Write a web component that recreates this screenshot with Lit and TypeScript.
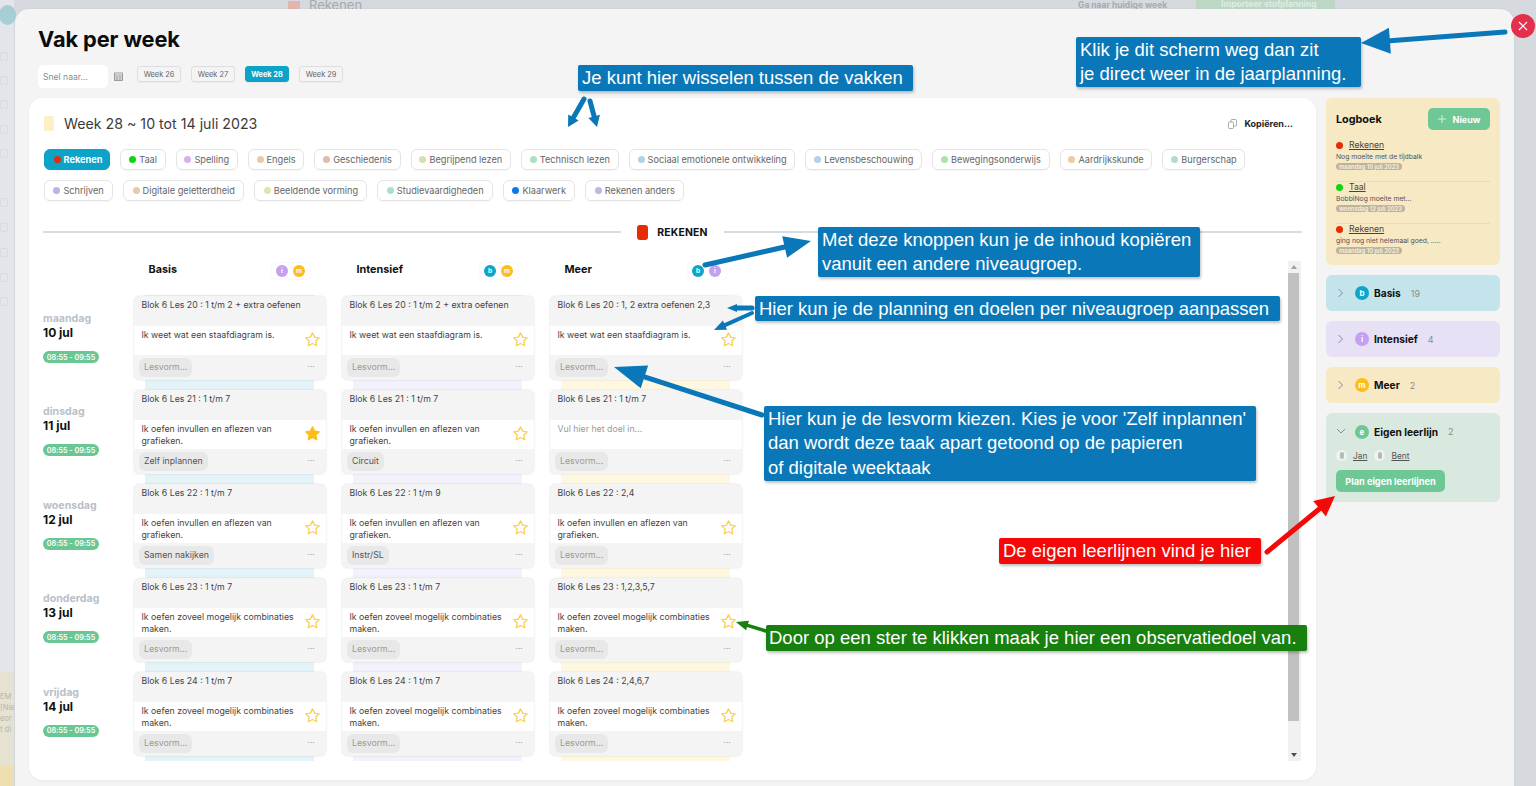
import { LitElement, html, css, svg } from "lit";
import { customElement } from "lit/decorators.js";

const chips1: [string, string][] = [
  ["Taal", "#12d60c"], ["Spelling", "#d3b2ee"], ["Engels", "#ecc9a4"], ["Geschiedenis", "#e6b9ac"], ["Begrijpend lezen", "#d6dfb4"],
  ["Technisch lezen", "#addfc6"], ["Sociaal emotionele ontwikkeling", "#aed3e6"], ["Levensbeschouwing", "#aed3ea"], ["Bewegingsonderwijs", "#aee3a8"], ["Aardrijkskunde", "#eccba3"], ["Burgerschap", "#b2dcd0"],
];
const chips2: [string, string][] = [
  ["Schrijven", "#b7b4e6"], ["Digitale geletterdheid", "#e6cba8"], ["Beeldende vorming", "#e2e3ae"], ["Studievaardigheden", "#a8e2c6"], ["Klaarwerk", "#0a78ee"], ["Rekenen anders", "#c0b6e4"],
];
const days = [["maandag", "10 jul"], ["dinsdag", "11 jul"], ["woensdag", "12 jul"], ["donderdag", "13 jul"], ["vrijdag", "14 jul"]];
const G1 = "Ik weet wat een staafdiagram is.";
const G2 = "Ik oefen invullen en aflezen van grafieken.";
const G3 = "Ik oefen zoveel mogelijk combinaties maken.";
type C = { t: string; g: string; l?: string; f?: boolean; e?: boolean };
const levels: { name: string; cls: string; badges: [string, string][]; cards: C[] }[] = [
  { name: "Basis", cls: "b", badges: [["i", "#c3a0f0"], ["m", "#fdbd1a"]], cards: [
    { t: "Blok 6 Les 20 : 1 t/m 2 + extra oefenen", g: G1 },
    { t: "Blok 6 Les 21 : 1 t/m 7", g: G2, l: "Zelf inplannen", f: true },
    { t: "Blok 6 Les 22 : 1 t/m 7", g: G2, l: "Samen nakijken" },
    { t: "Blok 6 Les 23 : 1 t/m 7", g: G3 },
    { t: "Blok 6 Les 24 : 1 t/m 7", g: G3 } ] },
  { name: "Intensief", cls: "i", badges: [["b", "#0ea5c9"], ["m", "#fdbd1a"]], cards: [
    { t: "Blok 6 Les 20 : 1 t/m 2 + extra oefenen", g: G1 },
    { t: "Blok 6 Les 21 : 1 t/m 7", g: G2, l: "Circuit" },
    { t: "Blok 6 Les 22 : 1 t/m 9", g: G2, l: "Instr/SL" },
    { t: "Blok 6 Les 23 : 1 t/m 7", g: G3 },
    { t: "Blok 6 Les 24 : 1 t/m 7", g: G3 } ] },
  { name: "Meer", cls: "m", badges: [["b", "#0ea5c9"], ["i", "#c3a0f0"]], cards: [
    { t: "Blok 6 Les 20 : 1, 2 extra oefenen 2,3", g: G1 },
    { t: "Blok 6 Les 21 : 1 t/m 7", g: "Vul hier het doel in...", e: true },
    { t: "Blok 6 Les 22 : 2,4", g: G2 },
    { t: "Blok 6 Les 23 : 1,2,3,5,7", g: G3 },
    { t: "Blok 6 Les 24 : 2,4,6,7", g: G3 } ] },
];
const log = [
  ["Rekenen", "#e62b05", "Nog moeite met de tijdbalk", "maandag 10 juli 2023"],
  ["Taal", "#12d60c", "BobbiNog moeite met...", "woensdag 12 juli 2023"],
  ["Rekenen", "#e62b05", "ging nog niet helemaal goed, .....", "maandag 10 juli 2023"],
];

const STAR = "M12 2.6l2.9 6.1 6.6.9-4.8 4.6 1.2 6.6L12 17.6l-5.9 3.2 1.2-6.6L2.5 9.6l6.6-.9z";

function arrow(x1: number, y1: number, x2: number, y2: number, w: number, hw: number, hl: number, c: string) {
  const a = Math.atan2(y2 - y1, x2 - x1);
  const bx = x2 - Math.cos(a) * hl, by = y2 - Math.sin(a) * hl;
  const nx = -Math.sin(a), ny = Math.cos(a);
  return svg`<line x1=${x1} y1=${y1} x2=${bx} y2=${by} stroke=${c} stroke-width=${w} stroke-linecap="round"></line>
    <polygon fill=${c} points="${x2},${y2} ${bx + nx * hw},${by + ny * hw} ${bx - nx * hw},${by - ny * hw}"></polygon>`;
}

@customElement("app-root")
export class AppRoot extends LitElement {
  static styles = css`
    :host { display: block; position: relative; width: 1536px; height: 786px; overflow: hidden; background: #d6dade; font-family: "Inter", "Liberation Sans", sans-serif; color: #333; }
    * { box-sizing: border-box; }
    .behind { position: absolute; inset: 0; }
    .bh-rek { position: absolute; left: 288px; top: -3px; display: flex; align-items: center; gap: 9px; font-size: 13px; color: #a6a9ad; }
    .bh-rek i { width: 12px; height: 9px; background: #e4b5ae; }
    .bh-wk { position: absolute; left: 1078px; top: 0; font-size: 8.5px; font-weight: 700; color: #a6abb0; }
    .bh-imp { position: absolute; left: 1196px; top: 0; width: 139px; height: 9px; background: #bcd8c4; font-size: 8.5px; font-weight: 700; color: #e0eae4; padding-left: 25px; line-height: 9px; overflow: hidden; }
    .bh-side { position: absolute; left: 0; top: 0; width: 14px; height: 786px; background: #e2e5e9; }
    .bh-logo { position: absolute; left: -1px; top: 5px; width: 17px; height: 20px; border-radius: 50%; background: #a7cdd6; }
    .bh-ico { position: absolute; left: 0; width: 8px; height: 9px; border: 1px solid #d8dbdf; border-radius: 2px; }
    .bh-yel { position: absolute; left: 0; top: 672px; width: 14px; height: 93px; background: #e6e2d2; font-size: 7.5px; color: #b4b3ad; line-height: 11px; padding-top: 19px; white-space: nowrap; overflow: hidden; }
    .bh-yel2 { position: absolute; left: 0; top: 765px; width: 14px; height: 21px; background: #efdfb0; }

    .page { position: relative; display: flex; padding: 9px 22px 0 15px; height: 786px; }
    .modal { flex: 1; height: 800px; background: #f4f4f4; border-radius: 14px; padding: 0 14px; box-shadow: 0 0 3px rgba(0,0,0,.05); }
    .head { height: 89px; padding: 15px 0 0 9px; }
    h1 { margin: 0; font-size: 21.8px; line-height: 30px; font-weight: 700; color: #0c0c0c; letter-spacing: -.1px; }
    .tools { display: flex; align-items: flex-start; margin-top: 11px; }
    .quick { width: 70px; height: 23px; background: #fff; border-radius: 5px; font-size: 8.6px; color: #8b8b8b; line-height: 24px; padding-left: 5px; }
    .cal { margin: 7px 14px 0 6px; width: 9px; height: 9px; }
    .weeks { display: flex; gap: 10px; margin-top: 1px; }
    .wk { width: 44px; height: 16px; border: 1px solid #dedede; border-radius: 3px; font-size: 7.4px; color: #666; display: flex; align-items: center; justify-content: center; box-shadow: 0 1px 1px rgba(0,0,0,.04); }
    .wk.on { background: #0ba3c8; color: #fff; font-weight: 700; border-color: #0ba3c8; }

    .body { display: flex; gap: 10px; }
    .main { width: 1287px; height: 682px; background: #fff; border-radius: 14px; padding: 0 14px; flex: none; box-shadow: 0 1px 3px rgba(0,0,0,.05); }
    .mh { display: flex; align-items: center; height: 51px; padding-left: 1px; }
    .flag { width: 10px; height: 15px; background: #fdf0c6; border-radius: 2px; margin-right: 10px; }
    .mt { font-size: 14.2px; color: #3a3a3a; flex: 1; }
    .copy { display: flex; align-items: center; gap: 7px; font-size: 9px; font-weight: 700; color: #222; margin-right: 9px; }
    .chips { display: flex; gap: 10px; height: 21px; margin-bottom: 10px; padding-left: 1px; }
    .chip { height: 21px; padding: 0 7.75px; border: 1px solid #e4e4e4; border-radius: 6px; font-size: 9.2px; color: #666; display: flex; align-items: center; gap: 3px; white-space: nowrap; box-shadow: 0 1px 1px rgba(0,0,0,.04); }
    .chips.r2 .chip { padding: 0 8.4px; }
    .chip i { width: 7px; height: 7px; border-radius: 50%; flex: none; margin-top: -1px; }
    .chip.on { background: #0ba3c8; border-color: #0ba3c8; color: #fff; font-weight: 700; padding: 0 7px 0 8.5px; }
    .div { display: flex; align-items: center; margin-top: 21px; height: 20px; }
    .div hr { flex: 1; border: 0; height: 2px; background: #d8dbe2; margin: 0; }
    .div .mid { width: 103px; display: flex; align-items: center; justify-content: center; gap: 9px; font-size: 10.4px; font-weight: 700; color: #111; letter-spacing: .2px; }
    .div .mid i { width: 11px; height: 15px; background: #e62b05; border-radius: 3px; }

    .sched { display: flex; margin-top: 19px; position: relative; height: 500px; }
    .dayc { width: 91px; padding-top: 33px; display: flex; flex-direction: column; flex: none; }
    .day { height: 94px; padding-top: 18px; }
    .dn { font-size: 10.6px; font-weight: 700; color: #b9bfc9; line-height: 13px; }
    .dd { font-size: 12px; font-weight: 700; color: #111; line-height: 15px; }
    .pill { width: 56px; height: 12px; border-radius: 6px; background: #6ac794; color: #fff; font-size: 7.2px; font-weight: 600; display: flex; align-items: center; justify-content: center; margin-top: 11px; }
    .lvl { width: 191.5px; margin-right: 16.5px; position: relative; flex: none; }
    .lvl::before { content: ""; position: absolute; left: 11px; right: 12px; top: 34px; height: 466px; }
    .lvl.b::before { background: #e3f3f7; }
    .lvl.i::before { background: #f2f1fc; }
    .lvl.m::before { background: #fff8e1; }
    .lh { height: 35px; display: flex; align-items: flex-start; justify-content: space-between; padding: 2px 16px 0 14.5px; position: relative; }
    .lh b { font-size: 10.8px; color: #111; line-height: 14px; margin-top: 0; }
    .sw { height: 16px; width: 38px; background: #fff; border-radius: 4px; display: flex; align-items: center; justify-content: center; gap: 5px; box-shadow: 0 0 2px rgba(0,0,0,.1); }
    .bdg { width: 12px; height: 12px; border-radius: 50%; color: #fff; font-size: 6.5px; font-weight: 700; display: flex; align-items: center; justify-content: center; flex: none; }
    .cards { display: flex; flex-direction: column; gap: 10px; position: relative; }
    .card { height: 84px; border-radius: 6px; overflow: hidden; background: #f4f4f4; box-shadow: 0 0 2px rgba(0,0,0,.16); display: flex; flex-direction: column; font-size: 8.75px; color: #444; }
    .ct { height: 30px; padding: 4px 7.5px 0; line-height: 11px; white-space: nowrap; }
    .cm { height: 29px; background: #fff; display: flex; padding: 4px 5px 0 7.5px; line-height: 11.5px; justify-content: space-between; }
    .cm span { width: 160px; }
    .cm .ph { color: #9a9a9a; }
    .cm svg { width: 17px; height: 17px; margin: 1px 0 0 0; flex: none; }
    .cb { flex: 1; display: flex; align-items: center; justify-content: space-between; padding: 0 11px 0 5px; }
    .lf { height: 19px; border-radius: 6px; background: #e8e8e8; padding: 0 5px; line-height: 19px; color: #555; font-size: 8.75px; }
    .lf.ph { color: #9a9a9a; }
    .dots { font-size: 8px; color: #8a8a8a; line-height: 8px; margin-top: -3px; }
    .scroll { position: absolute; left: 1245px; top: 0; width: 13px; height: 500px; background: #f1f1f1; }
    .thumb { position: absolute; left: 0; top: 12px; width: 11px; height: 448px; background: #c1c1c1; }
    .ar { position: absolute; left: 3px; width: 0; height: 0; border-left: 3px solid transparent; border-right: 3px solid transparent; }
    .ar.u { top: 4px; border-bottom: 4px solid #a0a0a0; }
    .ar.d { bottom: 4px; border-top: 4px solid #505050; }

    .side { width: 174px; flex: none; display: flex; flex-direction: column; gap: 10px; }
    .logb { height: 167px; background: #f6e9c4; border-radius: 6px; padding: 10px; }
    .lgh { display: flex; justify-content: space-between; align-items: center; height: 22px; margin-bottom: 10px; }
    .lgh b { font-size: 10.8px; color: #111; }
    .nw { width: 62px; height: 22px; background: #6ec896; border-radius: 5px; color: #fff; font-size: 9px; font-weight: 700; display: flex; align-items: center; justify-content: center; gap: 7px; }
    .nw svg { width: 8px; height: 8px; }
    .ent { height: 42px; border-bottom: 1px solid #e8dcb8; }
    .ent:last-child { border: 0; }
    .en { display: flex; align-items: center; gap: 6px; font-size: 8.6px; color: #444; text-decoration: underline; line-height: 11px; height: 11px; }
    .en i { width: 7px; height: 7px; border-radius: 50%; }
    .es { font-size: 6.8px; color: #555; line-height: 9px; margin-top: 1px; white-space: nowrap; }
    .ed { display: inline-block; margin-top: 2px; height: 7px; line-height: 7px; border-radius: 4px; background: #bcb39e; color: #f3ecd9; font-size: 5.8px; font-weight: 700; padding: 0 3px; vertical-align: top; }
    .gr { height: 36px; border-radius: 6px; display: flex; align-items: center; padding-left: 11px; font-size: 10.2px; color: #111; }
    .gr svg { width: 7px; height: 10px; flex: none; }
    .gr .bg2 { width: 14px; height: 14px; border-radius: 50%; color: #fff; font-size: 8px; font-weight: 700; display: flex; align-items: center; justify-content: center; margin: 0 5px 0 11px; }
    .gr b { margin-right: 10px; }
    .gr em { font-style: normal; font-size: 9px; color: #8c8c8c; }
    .own { height: 89px; background: #d9e9e0; border-radius: 6px; padding: 11px 10px 0; }
    .ownh { display: flex; align-items: center; font-size: 10.2px; color: #111; height: 15px; }
    .ownh svg { width: 10px; height: 7px; flex: none; }
    .ownh .bg2 { width: 14px; height: 14px; border-radius: 50%; background: #6ec896; color: #fff; font-size: 8px; font-weight: 700; display: flex; align-items: center; justify-content: center; margin: 0 5px 0 9px; }
    .ownh b { margin-right: 10px; }
    .ownh em { font-style: normal; font-size: 9px; color: #8c8c8c; }
    .pp { display: flex; align-items: center; margin-top: 11px; height: 11px; font-size: 8.4px; color: #555; }
    .pp i { width: 11px; height: 11px; border-radius: 50%; background: #edf3ef; margin-right: 6px; position: relative; }
    .pp i::after { content: ""; position: absolute; left: 3.5px; top: 2px; width: 4px; height: 7px; border-radius: 2px; background: #b4bbb7; }
    .pp u { margin-right: 7px; }
    .plan { width: 109px; height: 22px; margin-top: 9px; background: #6ec896; border-radius: 5px; color: #fff; font-size: 9.2px; font-weight: 700; display: flex; align-items: center; justify-content: center; }

    .close { position: absolute; left: 1511px; top: 14px; width: 24px; height: 24px; border-radius: 50%; background: #e2304d; display: flex; align-items: center; justify-content: center; }
    .close svg { width: 10px; height: 10px; }
    .arrows { position: absolute; left: 0; top: 0; width: 1536px; height: 786px; pointer-events: none; }
    .note { position: absolute; background: #0a78b8; color: #fff; font-family: "Liberation Sans", Arial, sans-serif; font-size: 18.5px; line-height: 24.3px; padding: 1px 4px 0; border-radius: 2px; box-shadow: 1px 2px 3px rgba(0,0,0,.25); white-space: pre; }
    .n1 { left: 578px; top: 65px; width: 335px; height: 26px; }
    .n2 { left: 1076px; top: 37px; width: 285px; height: 50px; }
    .n3 { left: 818px; top: 227px; width: 382px; height: 50px; }
    .n4 { left: 755px; top: 296px; width: 525px; height: 25px; }
    .n5 { left: 764px; top: 406px; width: 492px; height: 75px; }
    .n6 { left: 999px; top: 538px; width: 262px; height: 26px; background: #f50808; }
    .n7 { left: 766px; top: 625px; width: 541px; height: 26px; background: #18800e; padding: 1px 3px 0; }
  `;

  star(filled = false) {
    return html`<svg viewBox="0 0 24 24"><path d=${STAR} fill=${filled ? "#fdbd1a" : "none"} stroke=${filled ? "#fdbd1a" : "#f8cf5e"} stroke-width="1.9" stroke-linejoin="round"></path></svg>`;
  }

  card(c: C) {
    return html`<div class="card">
      <div class="ct">${c.t}</div>
      <div class="cm"><span class=${c.e ? "ph" : ""}>${c.g}</span>${c.e ? "" : this.star(c.f)}</div>
      <div class="cb"><div class="lf ${c.l ? "" : "ph"}">${c.l ?? "Lesvorm..."}</div><div class="dots">···</div></div>
    </div>`;
  }

  behind() {
    const ys = [52, 76, 100, 125, 149, 198, 223, 248, 273, 297];
    return html`<div class="behind">
      <div class="bh-rek"><i></i>Rekenen</div>
      <div class="bh-wk">Ga naar huidige week</div>
      <div class="bh-imp">Importeer stofplanning</div>
      <div class="bh-side">
        ${ys.map((y) => html`<div class="bh-ico" style="top:${y}px"></div>`)}
      </div>
      <div class="bh-logo"></div>
      <div class="bh-yel">EM<br />[Nie<br />eor<br />t di</div>
      <div class="bh-yel2"></div>
    </div>`;
  }

  render() {
    const chev = html`<svg viewBox="0 0 7 10"><path d="M1.5 1l4 4-4 4" fill="none" stroke="#7f8f96" stroke-width="1"></path></svg>`;
    return html`
      ${this.behind()}
      <div class="page">
        <div class="modal">
          <div class="head">
            <h1>Vak per week</h1>
            <div class="tools">
              <div class="quick">Snel naar...</div>
              <svg class="cal" viewBox="0 0 9 9"><rect x=".5" y="1" width="8" height="7.5" fill="none" stroke="#888" stroke-width=".8"></rect><path d="M.5 3h8M.5 5h8M.5 7h8M3 3v5M6 3v5" stroke="#888" stroke-width=".6"></path></svg>
              <div class="weeks">
                <div class="wk">Week 26</div><div class="wk">Week 27</div><div class="wk on">Week 28</div><div class="wk">Week 29</div>
              </div>
            </div>
          </div>
          <div class="body">
            <div class="main">
              <div class="mh">
                <div class="flag"></div>
                <div class="mt">Week 28 ~ 10 tot 14 juli 2023</div>
                <div class="copy"><svg width="9" height="10" viewBox="0 0 9 10"><rect x="3" y=".5" width="5.5" height="6.5" rx="1" fill="none" stroke="#888" stroke-width=".7"></rect><rect x=".5" y="3" width="5" height="6.5" rx="1" fill="#fff" stroke="#888" stroke-width=".7"></rect></svg>Kopiëren...</div>
              </div>
              <div class="chips">
                <div class="chip on"><i style="background:#e62b05"></i>Rekenen</div>
                ${chips1.map(([n, c]) => html`<div class="chip"><i style="background:${c}"></i>${n}</div>`)}
              </div>
              <div class="chips r2">
                ${chips2.map(([n, c]) => html`<div class="chip"><i style="background:${c}"></i>${n}</div>`)}
              </div>
              <div class="div"><hr /><div class="mid"><i></i>REKENEN</div><hr /></div>
              <div class="sched">
                <div class="dayc">
                  ${days.map(([a, b]) => html`<div class="day"><div class="dn">${a}</div><div class="dd">${b}</div><div class="pill">08:55 - 09:55</div></div>`)}
                </div>
                ${levels.map((l) => html`<div class="lvl ${l.cls}">
                  <div class="lh"><b>${l.name}</b><div class="sw">${l.badges.map(([t, c]) => html`<div class="bdg" style="background:${c}">${t}</div>`)}</div></div>
                  <div class="cards">${l.cards.map((c) => this.card(c))}</div>
                </div>`)}
                <div class="scroll"><div class="ar u"></div><div class="thumb"></div><div class="ar d"></div></div>
              </div>
            </div>
            <div class="side">
              <div class="logb">
                <div class="lgh"><b>Logboek</b><div class="nw"><svg viewBox="0 0 8 8"><path d="M4 0v8M0 4h8" stroke="#d6f0e0" stroke-width="1"></path></svg>Nieuw</div></div>
                ${log.map(([n, c, s, d]) => html`<div class="ent"><div class="en"><i style="background:${c}"></i>${n}</div><div class="es">${s}</div><div class="ed">${d}</div></div>`)}
              </div>
              <div class="gr" style="background:#c4e4eb">${chev}<div class="bg2" style="background:#0ea5c9">b</div><b>Basis</b><em>19</em></div>
              <div class="gr" style="background:#e8e0f5">${chev}<div class="bg2" style="background:#c3a0f0">i</div><b>Intensief</b><em>4</em></div>
              <div class="gr" style="background:#f6e9c4">${chev}<div class="bg2" style="background:#fdbd1a">m</div><b>Meer</b><em>2</em></div>
              <div class="own">
                <div class="ownh"><svg viewBox="0 0 10 7"><path d="M1 1l4 4 4-4" fill="none" stroke="#7f8f96" stroke-width="1"></path></svg><div class="bg2">e</div><b>Eigen leerlijn</b><em>2</em></div>
                <div class="pp"><i></i><u>Jan</u><i></i><u>Bent</u></div>
                <div class="plan">Plan eigen leerlijnen</div>
              </div>
            </div>
          </div>
        </div>
      </div>
      <div class="close"><svg viewBox="0 0 10 10"><path d="M1 1l8 8M9 1l-8 8" stroke="#fff" stroke-width="1.2"></path></svg></div>
      <svg class="arrows" viewBox="0 0 1536 786">
        ${arrow(584, 99, 568, 127, 5, 6, 11, "#0a78b8")}
        ${arrow(590, 101, 597, 127, 5, 6, 11, "#0a78b8")}
        ${arrow(1505, 32, 1361, 43, 5, 13, 29, "#0a78b8")}
        ${arrow(705, 265, 811, 241, 5, 11, 27, "#0a78b8")}
        ${arrow(752, 308, 727, 308, 5, 4, 10, "#0a78b8")}
        ${arrow(752, 313, 714, 330, 4, 5, 12, "#0a78b8")}
        ${arrow(762, 415, 614, 367, 5, 12, 32, "#0a78b8")}
        ${arrow(1267, 552, 1335, 496, 5, 10, 20, "#f50808")}
        ${arrow(766, 631, 736, 622, 3.5, 5, 12, "#18800e")}
      </svg>
      <div class="note n1">Je kunt hier wisselen tussen de vakken</div>
      <div class="note n2">Klik je dit scherm weg dan zit
je direct weer in de jaarplanning.</div>
      <div class="note n3">Met deze knoppen kun je de inhoud kopiëren
vanuit een andere niveaugroep.</div>
      <div class="note n4">Hier kun je de planning en doelen per niveaugroep aanpassen</div>
      <div class="note n5">Hier kun je de lesvorm kiezen. Kies je voor 'Zelf inplannen'
dan wordt deze taak apart getoond op de papieren
of digitale weektaak</div>
      <div class="note n6">De eigen leerlijnen vind je hier</div>
      <div class="note n7">Door op een ster te klikken maak je hier een observatiedoel van.</div>
    `;
  }
}
